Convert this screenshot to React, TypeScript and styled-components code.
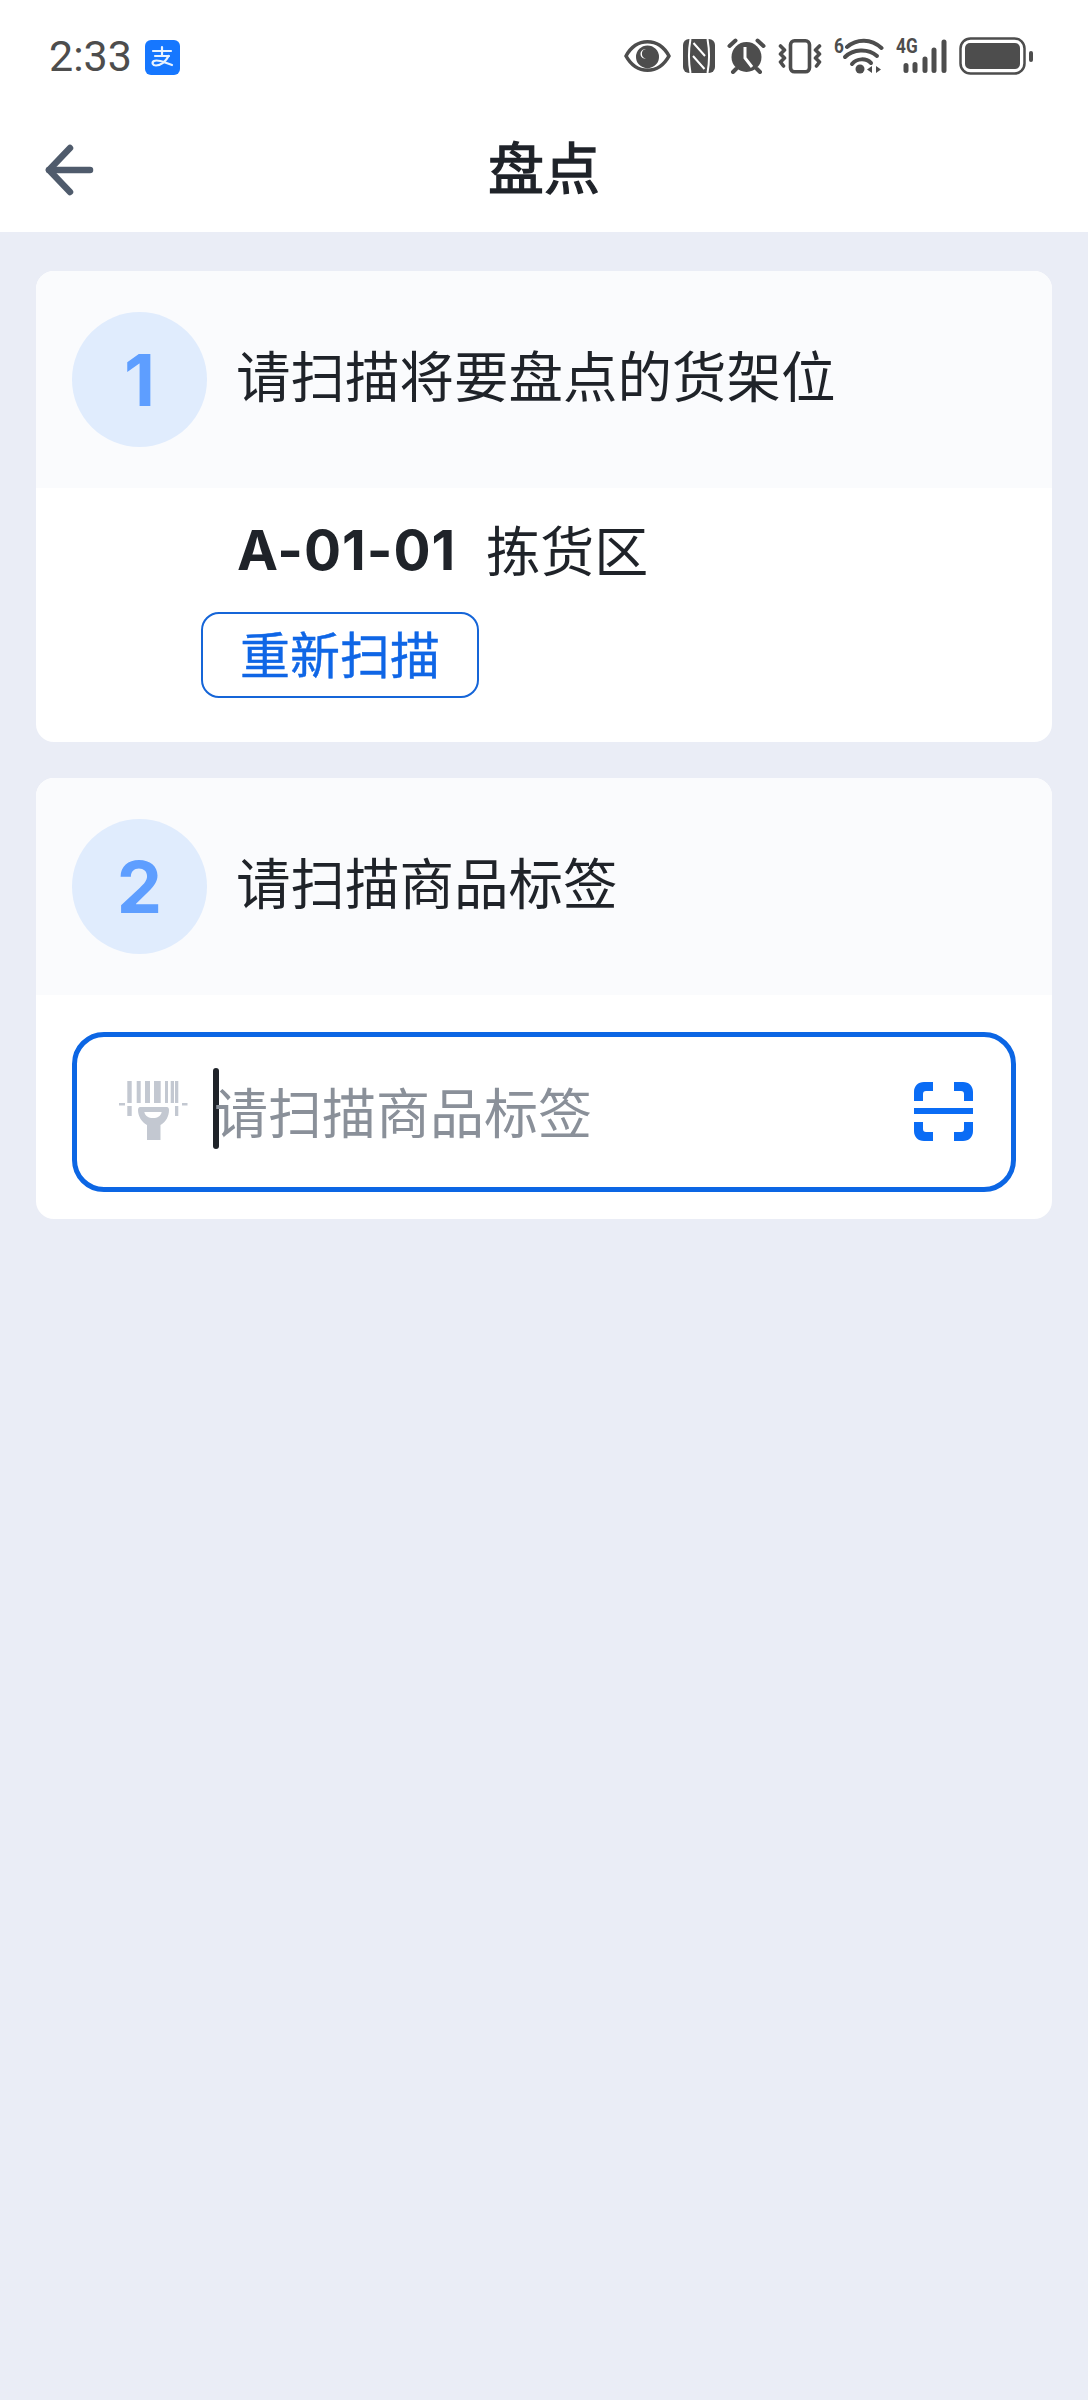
import React from 'react';
import styled, { createGlobalStyle } from 'styled-components';

const GlobalStyle = createGlobalStyle`
  html, body {
    margin: 0;
    padding: 0;
    background: #eaedf6;
  }
  * { box-sizing: border-box; }
`;

const cjkFont = `"Noto Sans CJK SC", sans-serif`;

const Page = styled.div`
  width: 1088px;
  height: 2400px;
  background: #eaedf6;
  font-family: Inter, ${cjkFont};
  color: #1f2329;
  overflow: hidden;
`;

const StatusBar = styled.div`
  height: 112px;
  background: #fff;
  display: flex;
  align-items: center;
  justify-content: space-between;
  padding: 0 54px 0 49px;
`;

const StatusLeft = styled.div`
  display: flex;
  align-items: center;
  gap: 13px;
`;

const Time = styled.span`
  font-family: Roboto, sans-serif;
  font-size: 43px;
  line-height: 1;
  color: #4d4d4d;
`;

const StatusIcons = styled.div`
  display: flex;
  align-items: center;
  gap: 12px;
  color: #4d4d4d;
`;

const BadgedIcon = styled.div`
  position: relative;
  display: flex;
`;

const NetworkLabel = styled.span`
  position: absolute;
  left: 0;
  top: -2px;
  font-family: Roboto, sans-serif;
  font-size: 21px;
  font-weight: 700;
  line-height: 1;
  color: #4d4d4d;
  transform: scaleX(0.82);
  transform-origin: left top;
`;

const NavBar = styled.div`
  height: 120px;
  background: #fff;
  position: relative;
  display: flex;
  align-items: center;
  justify-content: center;
  margin-bottom: 39px;
`;

const BackButton = styled.div`
  position: absolute;
  left: 44px;
  top: 31px;
  display: flex;
`;

const NavTitle = styled.div`
  font-family: ${cjkFont};
  font-size: 56px;
  line-height: 1;
  margin-top: -15px;
  -webkit-text-stroke: 1.3px #1f2329;
`;

const Card = styled.section`
  margin: 0 36px 36px;
  background: #fff;
  border-radius: 18px;
  overflow: hidden;
`;

const CardHead = styled.div`
  height: 217px;
  background: #fafbfd;
  display: flex;
  align-items: center;
  gap: 30px;
  padding: 0 36px 0 36px;
`;

const StepCircle = styled.div`
  width: 135px;
  height: 135px;
  border-radius: 50%;
  background: #e0ecfd;
  color: #5e9eff;
  display: flex;
  align-items: center;
  justify-content: center;
  font-size: 72px;
  font-weight: 700;
  line-height: 1;
`;

const StepTitle = styled.div`
  font-family: ${cjkFont};
  font-size: 54.5px;
  line-height: 1;
  margin-top: -10px;
  margin-left: -1px;
`;

const LocationBody = styled.div`
  height: 254px;
  padding: 29px 0 0 165px;
`;

const LocationRow = styled.div`
  display: flex;
  align-items: center;
  gap: 30px;
  height: 66px;
  margin-left: 36px;
  margin-bottom: 29px;
`;

const LocationCode = styled.span`
  font-size: 55px;
  font-weight: 700;
  letter-spacing: 1px;
  line-height: 1;
`;

const LocationZone = styled.span`
  font-family: ${cjkFont};
  font-size: 54px;
  line-height: 1;
  margin-top: -3px;
`;

const OutlineButton = styled.div`
  width: 278px;
  height: 86px;
  border: 2px solid #1565d8;
  border-radius: 18px;
  color: #0f66e6;
  font-family: ${cjkFont};
  font-size: 50px;
  line-height: 1;
  -webkit-text-stroke: 0.4px #0f66e6;
  display: flex;
  align-items: center;
  justify-content: center;
  padding-bottom: 6px;
`;

const InputBody = styled.div`
  padding: 37px 36px 27px;
`;

const ScanInput = styled.div`
  height: 160px;
  border: 5px solid #0c66e4;
  border-radius: 32px;
  display: flex;
  align-items: center;
  padding: 0 38px 0 42px;
`;

const Caret = styled.span`
  width: 6px;
  height: 81px;
  border-radius: 3px;
  background: #1f2329;
  margin-left: 24px;
  margin-right: -5px;
  margin-top: -7px;
  flex-shrink: 0;
`;

const Placeholder = styled.span`
  flex: 1;
  font-family: ${cjkFont};
  font-size: 54px;
  line-height: 1;
  color: #8a9099;
  margin-top: -3px;
`;

const AlipayIcon = () => (
  <svg width="35" height="35" viewBox="0 0 35 35" style={{ marginTop: 2 }}>
    <rect width="35" height="35" rx="6" fill="#1677ff" />
    <g fill="none" stroke="#e8f3ff" strokeWidth="2.2" strokeLinecap="round">
      <path d="M8 11h18M17 7v9M10 16h14" />
      <path d="M23.500 16c-2.500 5.500-8 9.500-12.500 9.500-3.500 0-4.500-3-2-4.500 4-2.200 10 1.500 18 4" />
    </g>
  </svg>
);

const EyeIcon = () => (
  <svg width="47" height="32" viewBox="0 0 47 32">
    <path
      d="M2 16C7 7 14 1.800 23.500 1.800S40 7 45 16C40 25 33 30.200 23.500 30.200S7 25 2 16Z"
      fill="none"
      stroke="currentColor"
      strokeWidth="3.600"
      strokeLinejoin="round"
    />
    <path d="M23.500 5.500a11.500 11.500 0 0 1 11.500 11.500c0 5-3 10-11.500 11.500C15 27 12 22 12 17A11.500 11.500 0 0 1 23.500 5.500Z" fill="currentColor" />
    <path d="M22 9a4.800 4.800 0 0 0 0 9.500c-2.500.6-5.500-1.300-5.500-4.500 0-3 2.700-5.300 5.500-5Z" fill="#fff" />
  </svg>
);

const NfcIcon = () => (
  <svg width="32" height="34" viewBox="0 0 32 34">
    <rect width="32" height="34" rx="6" fill="currentColor" />
    <g fill="none" stroke="#fff" strokeWidth="2">
      <path d="M7.500 0C5.500 11 5.500 23 7.500 34" />
      <path d="M24.500 0C26.500 11 26.500 23 24.500 34" />
      <path d="M10.500 4 22 17M10 17l11.500 13" />
    </g>
  </svg>
);

const AlarmIcon = () => (
  <svg width="39" height="36" viewBox="0 0 39 36">
    <g stroke="currentColor" strokeWidth="4" strokeLinecap="round" fill="none">
      <path d="M2.500 8l6-5.500M36.500 8l-6-5.500M6 34l3-3M33 34l-3-3" />
    </g>
    <circle cx="19.500" cy="19" r="15" fill="currentColor" />
    <path d="M18 9v11l7 9" stroke="#fff" strokeWidth="3" fill="none" />
  </svg>
);

const VibrateIcon = () => (
  <svg width="44" height="35" viewBox="0 0 44 35">
    <rect x="12.500" y="1.800" width="19" height="31" rx="4" fill="none" stroke="currentColor" strokeWidth="3.600" />
    <g stroke="currentColor" strokeWidth="3.600" strokeLinecap="round" strokeLinejoin="round" fill="none">
      <path d="M2.500 7l4 4-4 4 4 4-4 4 3 4" />
      <path d="M41.500 7l-4 4 4 4-4 4 4 4-3 4" />
    </g>
  </svg>
);

const WifiIcon = () => (
  <BadgedIcon>
    <svg width="50" height="36" viewBox="0 0 50 36">
      <g stroke="currentColor" strokeWidth="4" strokeLinecap="round" fill="none">
        <path d="M13 9C23 .5 37 .5 47.500 10" />
        <path d="M11 19C19 11 34 10 43 18" />
        <path d="M18 26C23 20 32 20 37 25" />
      </g>
      <circle cx="26" cy="31" r="4.500" fill="currentColor" />
      <path d="M38 28v7l-5-3.500ZM42 28v7l5-3.500Z" fill="currentColor" />
    </svg>
    <NetworkLabel>6</NetworkLabel>
  </BadgedIcon>
);

const SignalIcon = () => (
  <BadgedIcon>
    <svg width="51" height="36" viewBox="0 0 51 36">
      <g stroke="currentColor" strokeWidth="5" strokeLinecap="round">
        <path d="M10 27.500v5M19 26.500v6M29 21v11.500M38 12v20.500M48 4v28.500" />
      </g>
    </svg>
    <NetworkLabel>4G</NetworkLabel>
  </BadgedIcon>
);

const BatteryIcon = () => (
  <svg width="75" height="38" viewBox="0 0 75 38">
    <rect x="1.500" y="1.500" width="64" height="35" rx="10" fill="none" stroke="currentColor" strokeWidth="2.500" />
    <rect x="6" y="6" width="55" height="26" rx="5" fill="currentColor" />
    <rect x="70" y="14" width="4" height="11" rx="2" fill="currentColor" />
  </svg>
);

const BackIcon = () => (
  <svg width="50" height="54" viewBox="0 0 50 54" fill="none" stroke="#4f5b6c" strokeWidth="6.500" strokeLinecap="round" strokeLinejoin="round">
    <path d="M5 27h41" />
    <path d="M26 5 5 27l21 22" />
  </svg>
);

const BarcodeIcon = () => (
  <svg width="70" height="60" viewBox="0 0 70 60" fill="#c3c8d1" style={{ flexShrink: 0, marginTop: -2 }}>
    <path d="M8.300 0h4.400v22H8.300ZM17.700 0h4v22h-4ZM26 0h5v22h-5ZM35 0h6.700v22H35ZM46 0h3v22h-3ZM51.700 0H55v22h-3.300ZM56 0h3.300v22H56ZM8.300 25h4.400v10H8.300ZM56 25h3.300v10H56Z" />
    <path d="M0 22h6v2.500H0ZM63 22h5.500v2.500H63Z" />
    <path d="M21 26h27c1 0 2 1 2 3 0 6-3 12-8.500 15v15H28V44c-5.500-3-9-9-9-15 0-2 1-3 2-3Z" />
    <path d="M25.300 31h17.400c-1 4-4 6-8.700 6s-7.700-2-8.700-6Z" fill="#fff" />
  </svg>
);

const ScanIcon = () => (
  <svg width="59" height="59" viewBox="0 0 59 59" fill="#0a6cf5" style={{ flexShrink: 0, marginTop: -2 }}>
    <path d="M19 0v9h-7c-2 0-3 1-3 3v7H0v-9C0 4 4 0 10 0ZM40 0v9h7c2 0 3 1 3 3v7h9v-9c0-6-4-10-10-10ZM0 26h59v6H0ZM0 40h9v7c0 2 1 3 3 3h7v9h-9C4 59 0 55 0 49ZM59 40h-9v7c0 2-1 3-3 3h-7v9h9c6 0 10-4 10-10Z" />
  </svg>
);

const App: React.FC = () => {
  return (
    <Page>
      <GlobalStyle />
      <StatusBar>
        <StatusLeft>
          <Time>2:33</Time>
          <AlipayIcon />
        </StatusLeft>
        <StatusIcons>
          <EyeIcon />
          <NfcIcon />
          <AlarmIcon />
          <VibrateIcon />
          <WifiIcon />
          <SignalIcon />
          <BatteryIcon />
        </StatusIcons>
      </StatusBar>
      <NavBar>
        <BackButton>
          <BackIcon />
        </BackButton>
        <NavTitle>盘点</NavTitle>
      </NavBar>
      <Card>
        <CardHead>
          <StepCircle>1</StepCircle>
          <StepTitle>请扫描将要盘点的货架位</StepTitle>
        </CardHead>
        <LocationBody>
          <LocationRow>
            <LocationCode>A-01-01</LocationCode>
            <LocationZone>拣货区</LocationZone>
          </LocationRow>
          <OutlineButton>重新扫描</OutlineButton>
        </LocationBody>
      </Card>
      <Card>
        <CardHead>
          <StepCircle>2</StepCircle>
          <StepTitle>请扫描商品标签</StepTitle>
        </CardHead>
        <InputBody>
          <ScanInput>
            <BarcodeIcon />
            <Caret />
            <Placeholder>请扫描商品标签</Placeholder>
            <ScanIcon />
          </ScanInput>
        </InputBody>
      </Card>
    </Page>
  );
};

export default App;
